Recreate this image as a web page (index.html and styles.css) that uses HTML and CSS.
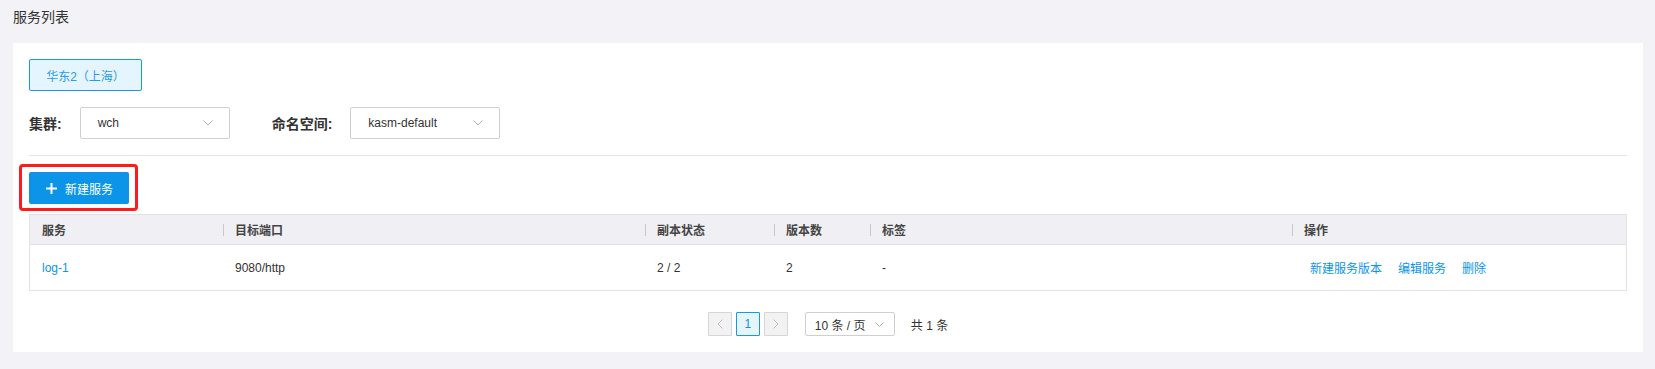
FILE: index.html
```html
<!DOCTYPE html>
<html lang="zh-CN">
<head>
<meta charset="utf-8">
<title>服务列表</title>
<link rel="stylesheet" href="styles.css">
</head>
<body>
<div class="page-title">服务列表</div>
<div class="card">
  <div class="region-row">
    <button class="region-btn">华东2（上海）</button>
  </div>
  <div class="filters">
    <div class="filter">
      <span class="filter-label">集群:</span>
      <div class="select">
        <span>wch</span>
        <svg class="chev" width="10" height="6" viewBox="0 0 10 6"><polyline points="0.5,0.5 5,5 9.5,0.5" fill="none" stroke="#b0b0b0" stroke-width="1"/></svg>
      </div>
    </div>
    <div class="filter">
      <span class="filter-label">命名空间:</span>
      <div class="select">
        <span>kasm-default</span>
        <svg class="chev" width="10" height="6" viewBox="0 0 10 6"><polyline points="0.5,0.5 5,5 9.5,0.5" fill="none" stroke="#b0b0b0" stroke-width="1"/></svg>
      </div>
    </div>
  </div>
  <div class="divider"></div>
  <div class="toolbar">
    <div class="highlight-wrap">
      <button class="primary-btn">
        <svg width="11" height="11" viewBox="0 0 11 11"><path d="M5.5 0V11M0 5.5H11" stroke="#fff" stroke-width="2"/></svg>
        <span>新建服务</span>
      </button>
      <div class="highlight"></div>
    </div>
  </div>
  <div class="table">
    <div class="thead">
      <div class="th first">服务</div>
      <div class="th">目标端口</div>
      <div class="th">副本状态</div>
      <div class="th">版本数</div>
      <div class="th">标签</div>
      <div class="th">操作</div>
    </div>
    <div class="trow">
      <div class="td"><a class="link">log-1</a></div>
      <div class="td">9080/http</div>
      <div class="td">2 / 2</div>
      <div class="td">2</div>
      <div class="td">-</div>
      <div class="td actions"><a class="link">新建服务版本</a><a class="link">编辑服务</a><a class="link">删除</a></div>
    </div>
  </div>
  <div class="pager">
    <span class="pg-btn disabled"><svg width="6" height="10" viewBox="0 0 6 10"><polyline points="5.5,0.5 1,5 5.5,9.5" fill="none" stroke="#c4c4c4" stroke-width="1"/></svg></span>
    <span class="pg-btn active">1</span>
    <span class="pg-btn disabled"><svg width="6" height="10" viewBox="0 0 6 10"><polyline points="0.5,0.5 5,5 0.5,9.5" fill="none" stroke="#c4c4c4" stroke-width="1"/></svg></span>
    <div class="pg-size">
      <span>10 条 / 页</span>
      <svg width="9" height="5" viewBox="0 0 9 5"><polyline points="0.5,0.5 4.5,4.5 8.5,0.5" fill="none" stroke="#b0b0b0" stroke-width="1"/></svg>
    </div>
    <span class="pg-total">共 1 条</span>
  </div>
</div>
</body>
</html>
```

FILE: styles.css
```css
* { box-sizing: border-box; }
html, body { margin: 0; }
body {
  background: #f3f3f7;
  font-family: "Liberation Sans", "Noto Sans CJK SC", sans-serif;
  font-size: 12px;
  color: #333;
  padding: 0 12px 17px 13px;
}
.page-title {
  height: 43px;
  line-height: 35px;
  font-size: 14px;
  color: #333;
}
.card {
  background: #fff;
  padding: 16px;
}
.region-row { display: flex; }
.region-btn {
  width: 113px;
  height: 32px;
  border: 1px solid #1a98e6;
  background: #e4f5fd;
  color: #2a9be6;
  font-family: inherit;
  font-size: 12px;
  border-radius: 2px;
  padding: 0;
}
.filters {
  display: flex;
  gap: 42px;
  margin-top: 16px;
}
.filter {
  display: flex;
  align-items: center;
  gap: 18px;
}
.filter-label {
  font-size: 14px;
  font-weight: bold;
  color: #333;
}
.select {
  width: 150px;
  height: 32px;
  border: 1px solid #d0d0d0;
  border-radius: 2px;
  display: flex;
  align-items: center;
  justify-content: space-between;
  padding: 0 16px 0 17px;
  color: #333;
}
.chev { display: block; }
.divider {
  height: 1px;
  background: #e5e5e5;
  margin-top: 16px;
}
.toolbar {
  display: flex;
  margin-top: 16px;
}
.highlight-wrap { position: relative; }
.primary-btn {
  width: 100px;
  height: 32px;
  border: none;
  border-radius: 2px;
  background: #0c94e8;
  color: #fff;
  font-family: inherit;
  font-size: 12px;
  display: flex;
  align-items: center;
  gap: 8px;
  padding: 0 0 0 17px;
}
.primary-btn svg { display: block; }
.highlight {
  position: absolute;
  top: -8px;
  left: -10px;
  right: -9px;
  bottom: -7px;
  border: 3px solid #ff1b1b;
  border-radius: 4px;
}
.table {
  margin-top: 10px;
  border: 1px solid #e2e2e2;
}
.thead, .trow {
  display: grid;
  grid-template-columns: 193px 422px 129px 96px 422px 1fr;
}
.thead {
  height: 30px;
  background: #f0f0f4;
  border-bottom: 1px solid #e2e2e2;
}
.th {
  display: flex;
  align-items: center;
  font-weight: bold;
  color: #444;
}
.th::before {
  content: "";
  width: 1px;
  height: 12px;
  background: #c8c8c8;
  margin-right: 11px;
}
.th.first { padding-left: 12px; }
.th.first::before { display: none; }
.trow { height: 45px; }
.td {
  display: flex;
  align-items: center;
  padding-left: 12px;
  color: #333;
}
.td.actions {
  padding-left: 18px;
  gap: 16px;
}
.link { color: #0c94e8; text-decoration: none; }
.pager {
  margin-top: 21px;
  display: flex;
  justify-content: center;
  align-items: center;
}
.pg-btn {
  width: 24px;
  height: 24px;
  border: 1px solid #d6d6d6;
  display: flex;
  align-items: center;
  justify-content: center;
  margin-right: 4px;
  border-radius: 1px;
}
.pg-btn.disabled { background: #f2f2f2; }
.pg-btn.active {
  border-color: #1a98e6;
  background: #e4f5fd;
  color: #1a8fdc;
}
.pg-btn svg { display: block; }
.pg-size {
  margin-left: 13px;
  width: 90px;
  height: 24px;
  border: 1px solid #d0d0d0;
  border-radius: 2px;
  display: flex;
  align-items: center;
  justify-content: space-between;
  padding: 0 10px 0 9px;
  color: #333;
}
.pg-size svg { display: block; }
.pg-total {
  margin-left: 16px;
  color: #333;
}
```
